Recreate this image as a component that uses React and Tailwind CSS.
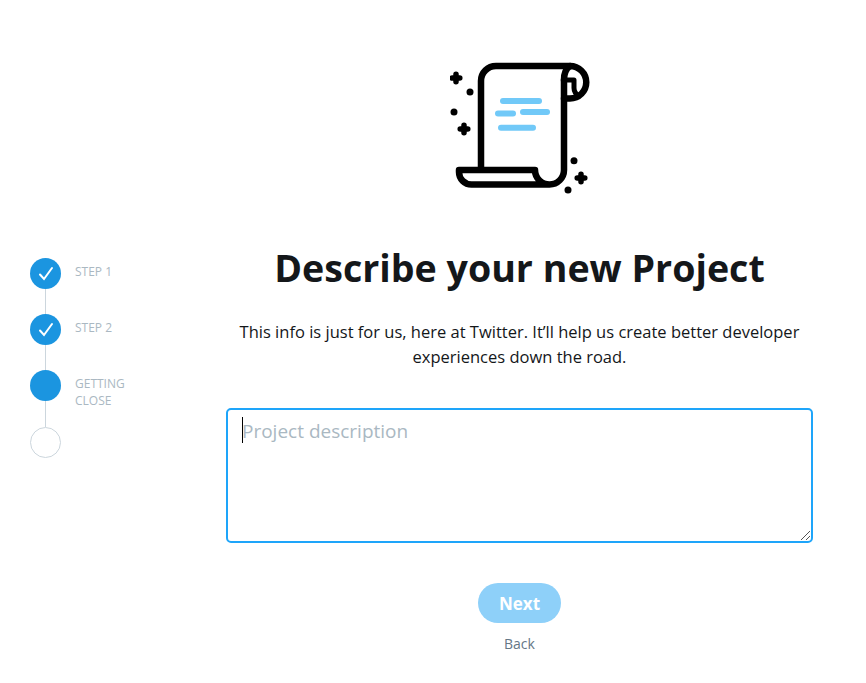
import React from 'react';

const steps = [
  { label: 'STEP 1', state: 'done' },
  { label: 'STEP 2', state: 'done' },
  { label: 'GETTING CLOSE', state: 'active' },
  { label: '', state: 'todo' },
];

const Check = () => (
  <svg width="16" height="16" viewBox="0 0 16 16" fill="none" stroke="#fff" strokeWidth="2" strokeLinecap="round">
    <path d="M2 8.5 L6 13 L14 2" />
  </svg>
);

const Stepper = () => (
  <div className="flex flex-col pl-[30px] pt-[258px]">
    {steps.map((step, idx) => (
      <div key={idx} className="flex">
        <div className="flex flex-col items-center w-[31px]">
          {step.state === 'todo' ? (
            <div className="w-[31px] h-[31px] rounded-full border border-[#ccd6dd] bg-white" />
          ) : (
            <div className="w-[31px] h-[31px] rounded-full bg-[#1b95e0] flex items-center justify-center">
              {step.state === 'done' && <Check />}
            </div>
          )}
          {idx < steps.length - 1 && (
            <div className={`w-px bg-[#ccd6dd] ${idx === 2 ? 'h-[26px]' : 'h-[25px]'}`} />
          )}
        </div>
        <div className="ml-[14px] w-[70px] pt-[5px] text-[12px] leading-[17px] text-[#aab8c2]">{step.label}</div>
      </div>
    ))}
  </div>
);

const ScrollIcon = () => (
  <svg width="140" height="135" viewBox="450 60 140 135" fill="none">
    <g stroke="#000" strokeWidth="6.5" strokeLinecap="round" strokeLinejoin="round">
      <path d="M481 168 V81 A15 15 0 0 1 496 66 H570" />
      <path d="M564 80 V170 A14.5 14.5 0 0 1 535 170 H459 V172 A12.5 12.5 0 0 0 471.5 184.5 H549.5" />
      <path d="M564 80 Q564 70 570 66 A16.25 16.25 0 0 1 570 98.5 H564" />
      <path d="M567 80 H574 V88 Q574 93 579 96" strokeWidth="5" />
    </g>
    <g stroke="#71c9f8" strokeWidth="6" strokeLinecap="round">
      <path d="M503 101 H539" />
      <path d="M498 113.5 H513" />
      <path d="M523 112 H547" />
      <path d="M501 127.7 H533" />
    </g>
    <g fill="#000">
      <circle cx="470" cy="92" r="3.5" />
      <circle cx="454" cy="112" r="3.5" />
      <circle cx="574" cy="160.7" r="3.5" />
      <circle cx="568" cy="190" r="3.5" />
    </g>
    <g stroke="#000" strokeWidth="5.5" strokeLinecap="round">
      <path d="M456 74.2 V81.8 M452.2 78 H459.8" />
      <path d="M464 125.2 V132.8 M460.2 129 H467.8" />
      <path d="M581 174.2 V181.8 M577.2 178 H584.8" />
    </g>
  </svg>
);

export default function App() {
  return (
    <div className="flex min-h-[683px] bg-white font-['Open_Sans',sans-serif]">
      <div className="w-[226px] shrink-0">
        <Stepper />
      </div>
      <main className="w-[587px] flex flex-col items-center pt-[60px]">
        <ScrollIcon />
        <h1 className="mt-[47px] text-[37.6px] leading-[52px] font-bold text-[#14171a]">Describe your new Project</h1>
        <p className="mt-[25px] w-[575px] text-center text-[16.5px] leading-[25px] text-[#14171a]">
          This info is just for us, here at Twitter. It’ll help us create better developer experiences down the road.
        </p>
        <div className="relative mt-[39px] w-[587px] h-[135px]">
          <textarea
            placeholder="Project description"
            className="w-full h-full block resize-none px-[14px] py-[5px] rounded-[5px] border-2 border-[#1ea5fa] outline-none caret-transparent text-[19px] leading-[32px] text-[#14171a] placeholder:text-[#aab8c2]"
          />
          {/* caret + resize grip sit over the field */}
          <div className="absolute left-[16px] top-[9px] w-px h-[26px] bg-black" />
          <svg className="absolute right-[2px] bottom-[2px]" width="11" height="11" viewBox="0 0 11 11" stroke="#555" strokeWidth="1">
            <path d="M1 10 L10 1 M6 10 L10 6" />
          </svg>
        </div>
        <button className="mt-[40px] w-[83px] h-[40px] pt-[1px] rounded-full bg-[#8ed0f9] text-white font-bold text-[17px]">Next</button>
        <a className="mt-[11px] text-[14px] leading-[20px] text-[#657786]">Back</a>
      </main>
    </div>
  );
}
